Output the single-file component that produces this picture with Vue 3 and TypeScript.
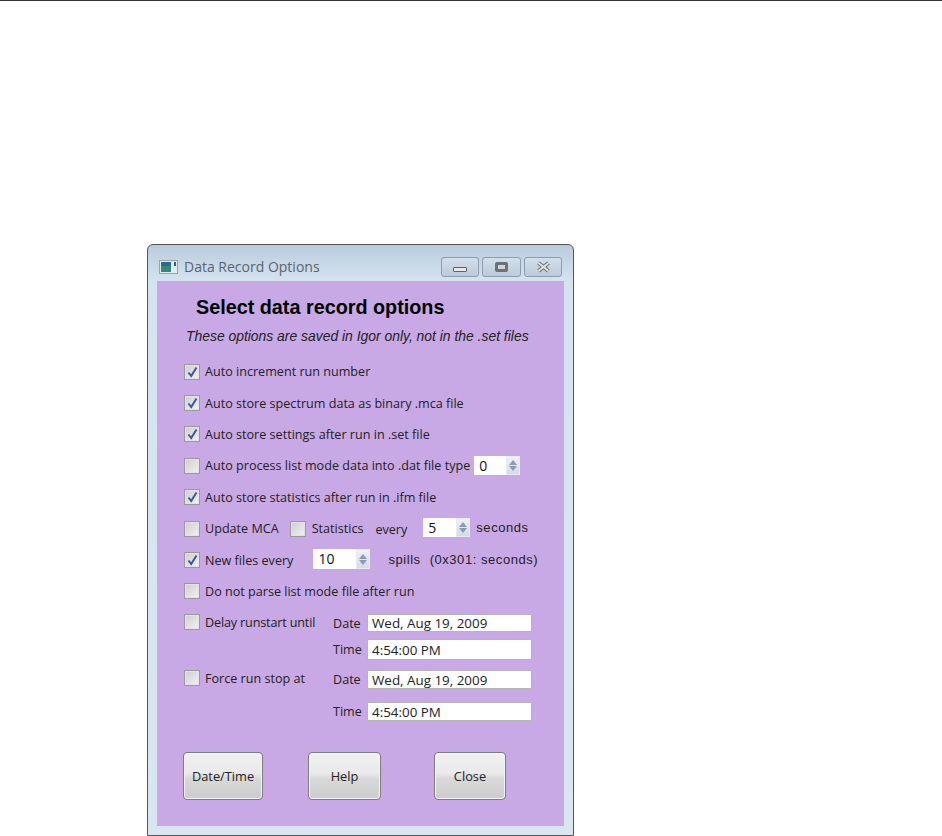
<script setup lang="ts">
/**
 * Data Record Options - Igor panel in a Windows 7 style window
 */

interface Stamp {
  label: string
  value: string
  height: number
  gap: number
}

const delayStamps: Stamp[] = [
  { label: 'Date', value: 'Wed, Aug 19, 2009', height: 18, gap: 7 },
  { label: 'Time', value: '4:54:00 PM', height: 21, gap: 10 }
]

const stopStamps: Stamp[] = [
  { label: 'Date', value: 'Wed, Aug 19, 2009', height: 19, gap: 13 },
  { label: 'Time', value: '4:54:00 PM', height: 19, gap: 0 }
]
</script>

<template>
  <div class="page">
    <div class="rule"></div>
    <div class="window">
      <div class="titlebar">
        <svg class="app-icon" width="19" height="14" viewBox="0 0 19 14">
          <rect x="0.5" y="0.5" width="18" height="13" fill="#e6eaec" stroke="#9aa4ac" />
          <rect x="2" y="2" width="10" height="10" fill="#2f8a78" />
          <rect x="2" y="2" width="10" height="4" fill="#2b6a96" />
          <rect x="15" y="2" width="2" height="4" fill="#2b5f96" />
        </svg>
        <span class="title">Data Record Options</span>
        <div class="controls">
          <div class="ctl ctl--min"><span class="min-glyph"></span></div>
          <div class="ctl ctl--max"><span class="max-glyph"></span></div>
          <div class="ctl ctl--close">
            <svg width="15" height="12" viewBox="0 0 15 12">
              <path d="M2.5 2 L12.5 10 M12.5 2 L2.5 10" stroke="#6a7177" stroke-width="4" fill="none" />
              <path d="M2.5 2 L12.5 10 M12.5 2 L2.5 10" stroke="#e4e7e9" stroke-width="1.8" fill="none" />
            </svg>
          </div>
        </div>
      </div>

      <div class="panel">
        <h1 class="heading">Select data record options</h1>
        <p class="note">These options are saved in Igor only, not in the .set files</p>

        <div class="rows">
          <div class="row">
            <span class="check is-on"><svg width="11" height="12" viewBox="0 0 11 12"><path d="M1.5 6.5 L4.2 10 L9.5 1.5" /></svg></span>
            <span class="lbl">Auto increment run number</span>
          </div>
          <div class="row">
            <span class="check is-on"><svg width="11" height="12" viewBox="0 0 11 12"><path d="M1.5 6.5 L4.2 10 L9.5 1.5" /></svg></span>
            <span class="lbl">Auto store spectrum data as binary .mca file</span>
          </div>
          <div class="row">
            <span class="check is-on"><svg width="11" height="12" viewBox="0 0 11 12"><path d="M1.5 6.5 L4.2 10 L9.5 1.5" /></svg></span>
            <span class="lbl">Auto store settings after run in .set file</span>
          </div>
          <div class="row">
            <span class="check"></span>
            <span class="lbl">Auto process list mode data into .dat file type</span>
            <div class="spin spin--type">
              <span class="spin__value">0</span>
              <span class="spin__arrows"><i class="up"></i><i class="down"></i></span>
            </div>
          </div>
          <div class="row">
            <span class="check is-on"><svg width="11" height="12" viewBox="0 0 11 12"><path d="M1.5 6.5 L4.2 10 L9.5 1.5" /></svg></span>
            <span class="lbl">Auto store statistics after run in .ifm file</span>
          </div>
          <div class="row">
            <span class="check"></span>
            <span class="lbl lbl--mca">Update MCA</span>
            <span class="check"></span>
            <span class="lbl lbl--stats">Statistics</span>
            <span class="plain plain--every">every</span>
            <div class="spin spin--secs">
              <span class="spin__value">5</span>
              <span class="spin__arrows"><i class="up"></i><i class="down"></i></span>
            </div>
            <span class="wide wide--secs">seconds</span>
          </div>
          <div class="row">
            <span class="check is-on"><svg width="11" height="12" viewBox="0 0 11 12"><path d="M1.5 6.5 L4.2 10 L9.5 1.5" /></svg></span>
            <span class="lbl lbl--files">New files every</span>
            <div class="spin spin--files">
              <span class="spin__value">10</span>
              <span class="spin__arrows"><i class="up"></i><i class="down"></i></span>
            </div>
            <span class="wide wide--spills">spills</span>
            <span class="wide wide--hint">(0x301: seconds)</span>
          </div>
          <div class="row">
            <span class="check"></span>
            <span class="lbl">Do not parse list mode file after run</span>
          </div>
        </div>

        <div class="timed timed--delay">
          <div class="timed__left">
            <span class="check"></span>
            <span class="lbl lbl--tight">Delay runstart until</span>
          </div>
          <div class="timed__right">
            <div
              v-for="s in delayStamps"
              :key="s.label"
              class="stamp"
              :style="{ marginBottom: s.gap + 'px' }"
            >
              <span class="stamp__label">{{ s.label }}</span>
              <span class="stamp__field" :style="{ height: s.height + 'px' }">{{ s.value }}</span>
            </div>
          </div>
        </div>

        <div class="timed timed--stop">
          <div class="timed__left">
            <span class="check"></span>
            <span class="lbl">Force run stop at</span>
          </div>
          <div class="timed__right">
            <div
              v-for="s in stopStamps"
              :key="s.label"
              class="stamp"
              :style="{ marginBottom: s.gap + 'px' }"
            >
              <span class="stamp__label">{{ s.label }}</span>
              <span class="stamp__field" :style="{ height: s.height + 'px' }">{{ s.value }}</span>
            </div>
          </div>
        </div>

        <div class="buttons">
          <button class="btn btn--date">Date/Time</button>
          <button class="btn btn--help">Help</button>
          <button class="btn btn--close">Close</button>
        </div>
      </div>
    </div>
  </div>
</template>

<style>
html,
body {
  margin: 0;
  background: #fff;
}
</style>

<style scoped>
.page {
  width: 942px;
  height: 836px;
  overflow: hidden;
  font-family: "Open Sans", "Noto Sans", sans-serif;
  font-size: 12.6px;
  color: #222;
}

.rule {
  height: 1px;
  background: #333;
}

/* Window chrome */
.window {
  box-sizing: border-box;
  width: 427px;
  height: 592px;
  margin: 243px 0 0 147px;
  padding: 0 9px;
  border: 1px solid #555;
  border-radius: 6px 6px 0 0;
  background: linear-gradient(#b9cbda 0, #d5e3f0 36px, #d9e6f2 100%);
}

.titlebar {
  display: flex;
  align-items: center;
  height: 36px;
  padding-top: 7px;
  box-sizing: border-box;
}

.app-icon {
  margin: 0 6px 0 2px;
  flex: none;
}

.title {
  font-size: 14px;
  color: #5a646d;
}

.controls {
  display: flex;
  gap: 3px;
  margin: 0 2px 0 auto;
}

.ctl {
  display: flex;
  align-items: center;
  justify-content: center;
  box-sizing: border-box;
  width: 38px;
  height: 20px;
  border: 1px solid #8c9dae;
  border-radius: 3px;
  background: linear-gradient(#d3dfea, #bccbd9);
}

.ctl--max {
  width: 39px;
}

.min-glyph {
  width: 12px;
  height: 3px;
  margin-top: 5px;
  border: 1px solid #5d6469;
  border-radius: 1px;
  background: #e6e8ea;
}

.max-glyph {
  box-sizing: border-box;
  width: 13px;
  height: 10px;
  border: 3px solid #6a7177;
  border-radius: 2px;
  background: #cfd5da;
}

/* Panel */
.panel {
  box-sizing: border-box;
  height: 545px;
  padding-top: 15px;
  background: #c8a9e5;
}

.heading {
  margin: 0 0 0 39px;
  font-family: "Liberation Sans", sans-serif;
  font-size: 19.8px;
  line-height: 22px;
  font-weight: 700;
  color: #000;
}

.note {
  margin: 11px 0 0 29px;
  font-family: "Liberation Sans", sans-serif;
  font-size: 13.9px;
  line-height: 14px;
  font-style: italic;
  color: #222;
}

.rows {
  margin: 13px 0 0 27px;
}

.row {
  display: flex;
  align-items: center;
  height: 31.4px;
}

.check {
  display: flex;
  align-items: center;
  justify-content: center;
  box-sizing: border-box;
  flex: none;
  width: 16px;
  height: 16px;
  border: 1px solid #9a9a9a;
  background: linear-gradient(135deg, #cdcdd2, #f2f2f4);
  box-shadow: inset 0 0 0 1px #e2e2e6;
}

.check svg path {
  fill: none;
  stroke: #3c5a9a;
  stroke-width: 2;
}

.lbl {
  margin-left: 5px;
  white-space: nowrap;
}

.lbl--mca {
  margin-right: 11px;
}

.lbl--stats {
  margin-left: 6px;
}

.lbl--tight {
  letter-spacing: -0.15px;
}

.plain {
  white-space: nowrap;
}

.plain--every {
  margin: 1px 16px 0 12px;
}

.lbl--files {
  margin-right: 20px;
}

.wide {
  font-family: "Liberation Sans", sans-serif;
  font-size: 13px;
  letter-spacing: 0.55px;
  white-space: nowrap;
  margin-top: -2px;
}

.wide--secs {
  margin-left: 6px;
}

.wide--spills {
  margin-left: 18px;
}

.wide--hint {
  margin-left: 9px;
}

/* Spin fields */
.spin {
  display: flex;
  flex: none;
  background: #fff;
}

.spin__value {
  box-sizing: border-box;
  padding-left: 5px;
  font-size: 14px;
  line-height: 19px;
  color: #111;
}

.spin__arrows {
  display: flex;
  flex-direction: column;
  gap: 1px;
  align-items: center;
  justify-content: center;
  width: 14px;
  background: linear-gradient(#eef1f6, #d5dbe6);
  border: 1px solid #e8eaee;
  box-sizing: border-box;
}

.spin__arrows i {
  display: block;
  width: 0;
  height: 0;
  border-left: 4px solid transparent;
  border-right: 4px solid transparent;
}

.spin__arrows .up {
  border-bottom: 5px solid #8a9ab8;
}

.spin__arrows .down {
  border-top: 5px solid #8a9ab8;
}

.spin--type {
  margin-left: 4px;
  height: 19px;
}

.spin--type .spin__value {
  width: 32px;
}

.spin--secs {
  height: 19px;
  margin-top: -2px;
}

.spin--secs .spin__value {
  width: 33px;
}

.spin--files {
  height: 20px;
  margin-top: -2px;
}

.spin--files .spin__value {
  width: 43px;
}

/* Date and time blocks */
.timed {
  display: flex;
  margin-left: 27px;
}

.timed--delay {
  margin-top: 7px;
}

.timed__left {
  display: flex;
  align-items: flex-start;
  width: 149px;
  height: 18px;
  flex: none;
}

.stamp {
  display: flex;
  align-items: center;
}

.stamp__label {
  width: 34px;
  flex: none;
}

.stamp__field {
  box-sizing: border-box;
  display: flex;
  align-items: center;
  width: 165px;
  padding-left: 4px;
  border: 1px solid #b5b5b5;
  background: #fff;
  font-size: 13.4px;
  color: #222;
}

/* Buttons */
.buttons {
  display: flex;
  margin: 31px 0 0 26px;
}

.btn {
  box-sizing: border-box;
  height: 48px;
  padding: 0;
  border: 1px solid #7c7c7c;
  border-radius: 4px;
  background: linear-gradient(#f1f1f1 0, #e9e9e9 45%, #d9d9d9 55%, #cccccc 100%);
  box-shadow: inset 0 0 0 1px #f4f4f4;
  font-family: inherit;
  font-size: 12.8px;
  color: #222;
}

.btn--date {
  width: 80px;
  margin-right: 45px;
}

.btn--help {
  width: 73px;
  margin-right: 53px;
}

.btn--close {
  width: 72px;
}
</style>
